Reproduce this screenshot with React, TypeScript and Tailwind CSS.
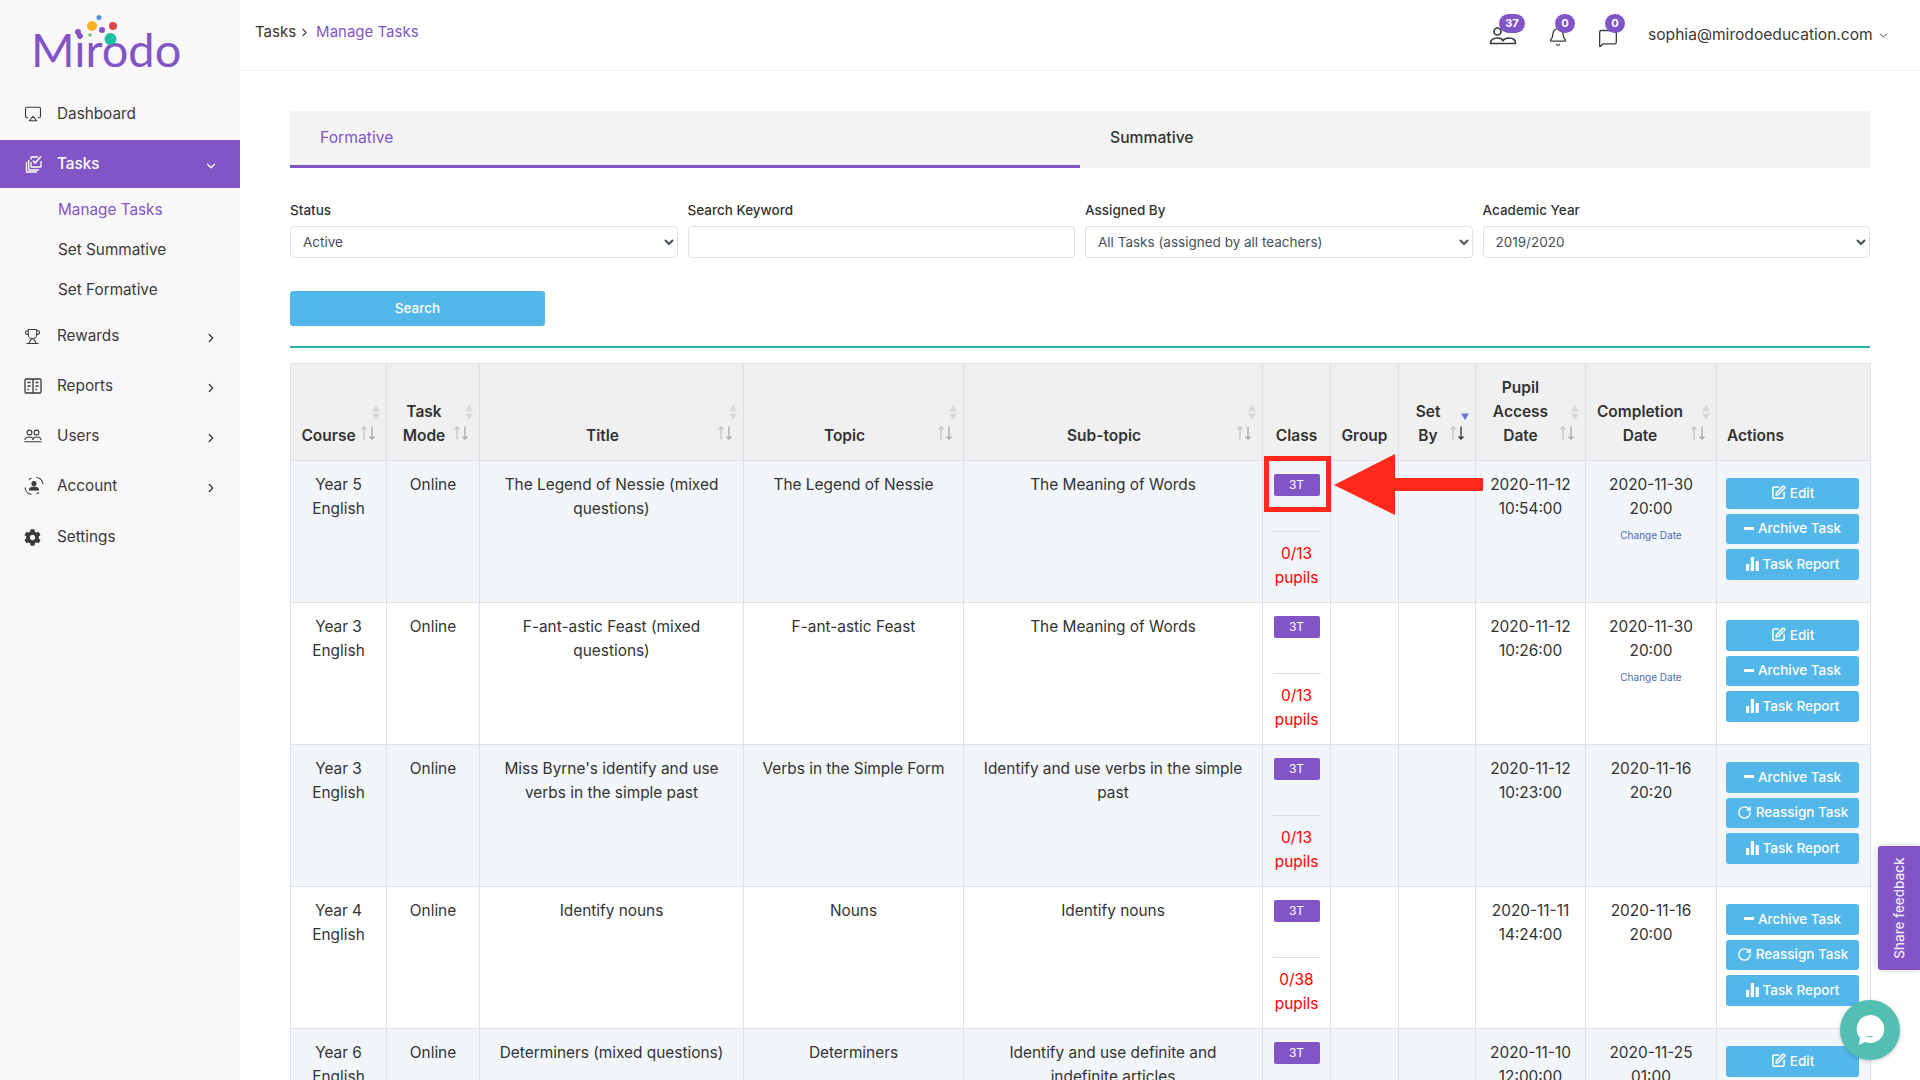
import { Airplay, Bell, ChevronDown, ChevronRight, MessageSquare, RotateCw, SquarePen, Trophy } from "lucide-react";
import { FaCog } from "react-icons/fa";

const FONT = "font-['Inter','Liberation_Sans',sans-serif]";

type Action = "edit" | "archive" | "reassign" | "report";

type Row = {
  course: string[];
  title: string;
  topic: string;
  subtopic: string;
  pupils: string;
  access: string[];
  completion: string[];
  changeDate?: boolean;
  actions: Action[];
};

const rows: Row[] = [
  {
    course: ["Year 5", "English"],
    title: "The Legend of Nessie (mixed questions)",
    topic: "The Legend of Nessie",
    subtopic: "The Meaning of Words",
    pupils: "0/13",
    access: ["2020-11-12", "10:54:00"],
    completion: ["2020-11-30", "20:00"],
    changeDate: true,
    actions: ["edit", "archive", "report"],
  },
  {
    course: ["Year 3", "English"],
    title: "F-ant-astic Feast (mixed questions)",
    topic: "F-ant-astic Feast",
    subtopic: "The Meaning of Words",
    pupils: "0/13",
    access: ["2020-11-12", "10:26:00"],
    completion: ["2020-11-30", "20:00"],
    changeDate: true,
    actions: ["edit", "archive", "report"],
  },
  {
    course: ["Year 3", "English"],
    title: "Miss Byrne's identify and use verbs in the simple past",
    topic: "Verbs in the Simple Form",
    subtopic: "Identify and use verbs in the simple past",
    pupils: "0/13",
    access: ["2020-11-12", "10:23:00"],
    completion: ["2020-11-16", "20:20"],
    actions: ["archive", "reassign", "report"],
  },
  {
    course: ["Year 4", "English"],
    title: "Identify nouns",
    topic: "Nouns",
    subtopic: "Identify nouns",
    pupils: "0/38",
    access: ["2020-11-11", "14:24:00"],
    completion: ["2020-11-16", "20:00"],
    actions: ["archive", "reassign", "report"],
  },
  {
    course: ["Year 6", "English"],
    title: "Determiners (mixed questions)",
    topic: "Determiners",
    subtopic: "Identify and use definite and indefinite articles",
    pupils: "0/13",
    access: ["2020-11-10", "12:00:00"],
    completion: ["2020-11-25", "01:00"],
    actions: ["edit", "archive", "report"],
  },
];

const TasksIcon = () => (
  <svg width="18" height="18" viewBox="0 0 18 18" fill="none" stroke="currentColor" strokeWidth="1.3">
    <path d="M6 4.5V2.6c0-.4.3-.6.6-.6h6.400M16 6v5.400c0 .4-.3.6-.6.6H6.600c-.4 0-.6-.3-.6-.6V7" />
    <path d="M3.700 5v9.400c0 .3.2.6.6.6H14" />
    <path d="M1.500 7v9.400c0 .3.2.6.6.6H12" />
    <path d="M8 5.500l2.200 2.500L16 1.500" strokeWidth="1.500" />
  </svg>
);

const ReportsIcon = () => (
  <svg width="18" height="16" viewBox="0 0 18 16" fill="none" stroke="currentColor" strokeWidth="1.3">
    <rect x="1" y="1" width="16" height="14" rx="1.2" />
    <path d="M9 1v14M3.500 4.500h3M11.500 4.500h3M3.500 8h3M11.500 8h3M3.500 11.500h1.500M11.500 11.500h1.500" />
  </svg>
);

const UsersIcon = () => (
  <svg width="18" height="14" viewBox="0 0 18 14" fill="none" stroke="currentColor" strokeWidth="1.1">
    <circle cx="5.500" cy="3.500" r="2.400" />
    <circle cx="12.500" cy="3.500" r="2.400" />
    <path d="M1 11c0-2 2-3 4.500-3S9 9 9 11M9 11c0-2 1-3 3.500-3s4.500 1 4.500 3M.5 12.700h17" />
  </svg>
);

const AccountIcon = () => (
  <svg width="20" height="20" viewBox="0 0 20 20" fill="none" stroke="currentColor" strokeWidth="1.100">
    <circle cx="10" cy="7.500" r="2" fill="currentColor" />
    <path d="M5.500 14c0-2 2-3 4.500-3s4.500 1 4.500 3z" fill="currentColor" />
    <path d="M1 11.500c.3 3.500 3 6.500 6.500 7M19 8c-.4-3.300-3-6-6.500-6.800M5 3.500c.8-.6 1.600-1 2.500-1.300M15 16.500c-.8.6-1.600 1-2.500 1.300" />
  </svg>
);

const PupilIcon = () => (
  <svg width="28" height="18" viewBox="0 0 28 18" fill="none" stroke="#3a3a3a" strokeWidth="1.700">
    <circle cx="8.500" cy="4.500" r="3.500" />
    <path d="M1 16.500h26M1.500 16.500c0-3.500 3-5.500 7-5.500 3 0 4.500 1 5.500 2.500 1-1.500 3-2.500 6-2.500 4 0 6.500 2 6.500 5.500" />
  </svg>
);

const BarsIcon = () => (
  <svg width="13" height="14" viewBox="0 0 13 14" fill="currentColor">
    <rect x="0" y="7" width="3.200" height="7" rx="0.500" />
    <rect x="4.800" y="0" width="3.200" height="14" rx="0.500" />
    <rect x="9.600" y="4" width="3.200" height="10" rx="0.500" />
  </svg>
);

function SortMarks({ active }: { active?: boolean }) {
  return (
    <>
      <span className="absolute top-[41px] right-[5px] w-[10px]">
        <svg width="10" height="16" viewBox="0 0 10 16">
          {!active && <path d="M5 0l4 6.500H1z" fill="#d8d8d8" />}
          <path d="M5 15l4-6.500H1z" fill={active ? "#6c74d8" : "#d8d8d8"} />
        </svg>
      </span>
      <span className="absolute top-[62px] right-[10px]">
        <svg width="16" height="14" viewBox="0 0 16 14" fill="none" strokeWidth="1.300">
          <path d="M4 13.500V1M1.500 3.500L4 1l2.500 2.500" stroke="#c4c4c4" />
          <path d="M12 .5V13M9.500 10.500L12 13l2.500-2.500" stroke={active ? "#333" : "#a8a8a8"} />
        </svg>
      </span>
    </>
  );
}

function ActionButton({ kind }: { kind: Action }) {
  const base = "flex h-[30.500px] w-[133px] items-center justify-center gap-[4px] rounded-[3px] bg-[#54b7ea] pb-[1px] text-[13.500px] font-medium text-white";
  if (kind === "edit") {
    return (
      <button className={base}>
        <SquarePen size={15} strokeWidth={2.400} />
        Edit
      </button>
    );
  }
  if (kind === "archive") {
    return (
      <button className={base}>
        <span className="h-[3px] w-[10px] bg-white" />
        Archive Task
      </button>
    );
  }
  if (kind === "reassign") {
    return (
      <button className={base}>
        <RotateCw size={15} strokeWidth={2.200} />
        Reassign Task
      </button>
    );
  }
  return (
    <button className={base}>
      <BarsIcon />
      Task Report
    </button>
  );
}

function NavItem({ label, icon, chevron = true }: { label: string; icon: React.ReactNode; chevron?: boolean }) {
  return (
    <div className="flex h-[50px] items-center pl-[24px] pr-[22px] text-[#3a3a3a]">
      <span className="flex w-[33px] shrink-0 items-center">{icon}</span>
      <span className="flex-1 text-[15.300px]">{label}</span>
      {chevron && <ChevronRight size={14} strokeWidth={2.200} className="mt-[4px]" />}
    </div>
  );
}

function Badge({ value, className }: { value: string; className: string }) {
  return (
    <span className={`absolute top-[14px] flex h-[19px] items-center justify-center rounded-full bg-[#8255c6] text-[11px] font-bold text-white ${className}`}>
      {value}
    </span>
  );
}

function Field({ label, children }: { label: string; children: React.ReactNode }) {
  return (
    <div>
      <label className="mb-[6px] block h-[20px] text-[13.500px] leading-[20px] font-medium text-[#333]">{label}</label>
      {children}
    </div>
  );
}

const Select = ({ value }: { value: string }) => (
  <select
    defaultValue={value}
    className="h-[32px] w-full rounded-[4px] border border-[#dbe2ea] bg-white pl-[8px] text-[13.500px] text-[#495057]"
  >
    <option>{value}</option>
  </select>
);

const headCell = "relative border border-[#dee2e6] pt-3 pb-[12px] pl-3 pr-[30px] align-bottom text-[15.500px] leading-[24px] font-semibold text-[#333]";
const bodyCell = "border border-[#dee2e6] px-2 pt-3 align-top text-center text-[15.400px] leading-[24px] text-[#333]";

export default function App() {
  return (
    <div className={`relative flex h-screen overflow-hidden bg-white ${FONT}`}>
      <aside className="w-[240px] shrink-0 bg-[#f9f7f9]">
        <div className="relative h-[89px]">
          <span className="absolute top-[19px] left-[31px] font-['Lato',sans-serif] text-[47px] leading-[60px] text-[#8255c6]">Mirodo</span>
          <svg className="absolute top-0 left-0" width="240" height="89">
            <circle cx="99" cy="17.500" r="2.500" fill="#4a90e2" />
            <circle cx="92" cy="26" r="5" fill="#fbb324" />
            <circle cx="113" cy="26" r="4" fill="#e04545" />
            <circle cx="102" cy="30" r="3" fill="#8255c6" />
            <circle cx="78" cy="32" r="3" fill="#8255c6" />
            <circle cx="90" cy="35" r="1.700" fill="#63c76a" />
            <circle cx="110.500" cy="39" r="6" fill="#1cc0a0" />
          </svg>
        </div>
        <NavItem label="Dashboard" chevron={false} icon={<Airplay size={18} strokeWidth={1.500} />} />
        <div className="mt-[1px] flex h-[48px] items-center bg-[#8255c6] pl-[25px] pr-[22px] text-white">
          <span className="flex w-[32px] shrink-0 items-center">
            <TasksIcon />
          </span>
          <span className="flex-1 text-[15.300px] font-medium">Tasks</span>
          <ChevronDown size={14} strokeWidth={2.200} className="mt-[4px]" />
        </div>
        <div className="mb-[1px] flex flex-col pt-[2px] pl-[58px] text-[15.300px] text-[#3a3a3a]">
          <span className="flex h-[40px] items-center text-[#8255c6]">Manage Tasks</span>
          <span className="flex h-[40px] items-center">Set Summative</span>
          <span className="flex h-[40px] items-center">Set Formative</span>
        </div>
        <NavItem label="Rewards" icon={<Trophy size={17} strokeWidth={1.500} />} />
        <NavItem label="Reports" icon={<ReportsIcon />} />
        <NavItem label="Users" icon={<UsersIcon />} />
        <NavItem label="Account" icon={<AccountIcon />} />
        <div className="mt-[1px]">
          <NavItem label="Settings" chevron={false} icon={<FaCog size={17} />} />
        </div>
      </aside>

      <div className="min-w-0 flex-1">
        <header className="relative flex h-[71px] items-center border-b border-[#f0f0f0] pl-[15px] pr-[30px]">
          <div className="mb-[5px] flex items-center">
            <span className="text-[15px] text-[#333]">Tasks</span>
            <ChevronRight size={13} strokeWidth={2} className="mx-[2px] text-[#444]" />
            <span className="ml-[3px] text-[15px] text-[#8255c6]">Manage Tasks</span>
          </div>
          <div className="ml-auto flex items-center text-[#3a3a3a]">
            <span className="mt-[1px] mr-[31px]">
              <PupilIcon />
            </span>
            <Bell size={20} strokeWidth={1.600} className="mt-[4px] mr-[30px]" />
            <MessageSquare size={20} strokeWidth={1.600} className="mt-[6px] mr-[30px]" />
            <span className="w-[225px] text-[15.600px] whitespace-nowrap">sophia@mirodoeducation.com</span>
            <ChevronDown size={13} strokeWidth={1.800} className="ml-[4px]" />
          </div>
          <Badge value="37" className="left-[1259px] w-[26px]" />
          <Badge value="0" className="left-[1315px] w-[20px]" />
          <Badge value="0" className="left-[1365px] w-[20px]" />
        </header>

        <main className="px-[50px] pt-[40px]">
          <div className="flex h-[57px] bg-[#f4f4f4]">
            <div className="flex w-[790px] items-center border-b-[3px] border-[#8255c6] pl-[30px] text-[15.700px] text-[#8255c6]">Formative</div>
            <div className="flex items-center border-b-[3px] border-transparent pl-[30px] text-[15.700px] font-medium text-[#333]">Summative</div>
          </div>

          <div className="mt-[32px] grid grid-cols-4 gap-[10px]">
            <Field label="Status">
              <Select value="Active" />
            </Field>
            <Field label="Search Keyword">
              <input className="h-[32px] w-full rounded-[4px] border border-[#dbe2ea] bg-white" />
            </Field>
            <Field label="Assigned By">
              <Select value="All Tasks (assigned by all teachers)" />
            </Field>
            <Field label="Academic Year">
              <Select value="2019/2020" />
            </Field>
          </div>

          <button className="mt-[33px] block h-[35px] w-[255px] rounded-[3px] bg-[#54b7ea] text-[13.500px] font-medium text-white">Search</button>
          <div className="mt-[20px] h-[2px] bg-[#2fb3a3]" />

          <table className="mt-[15px] w-[1580px] table-fixed border-collapse">
            <colgroup>
              <col className="w-[96px]" />
              <col className="w-[93px]" />
              <col className="w-[264px]" />
              <col className="w-[220px]" />
              <col className="w-[299px]" />
              <col className="w-[68px]" />
              <col className="w-[68px]" />
              <col className="w-[77px]" />
              <col className="w-[110px]" />
              <col className="w-[131px]" />
              <col className="w-[154px]" />
            </colgroup>
            <thead>
              <tr className="h-[97px] bg-[#f0f0f0]">
                <th className={`${headCell} !pl-[10px]`}>
                  Course
                  <SortMarks />
                </th>
                <th className={headCell}>
                  Task Mode
                  <SortMarks />
                </th>
                <th className={headCell}>
                  Title
                  <SortMarks />
                </th>
                <th className={headCell}>
                  Topic
                  <SortMarks />
                </th>
                <th className={headCell}>
                  Sub-topic
                  <SortMarks />
                </th>
                <th className={`${headCell} !px-0`}>Class</th>
                <th className={`${headCell} !px-0`}>Group</th>
                <th className={headCell}>
                  Set By
                  <SortMarks active />
                </th>
                <th className={`${headCell} !pl-[10px]`}>
                  Pupil Access Date
                  <SortMarks />
                </th>
                <th className={`${headCell} !pl-[8px]`}>
                  Completion Date
                  <SortMarks />
                </th>
                <th className={`${headCell} !pl-[10px] !pr-0 text-left`}>Actions</th>
              </tr>
            </thead>
            <tbody>
              {rows.map((row, i) => (
                <tr key={row.title} className={`h-[142px] ${i % 2 === 0 ? "bg-[#f2f5f9]" : "bg-white"}`}>
                  <td className={bodyCell}>
                    {row.course[0]}
                    <br />
                    {row.course[1]}
                  </td>
                  <td className={bodyCell}>Online</td>
                  <td className={`${bodyCell} !px-3`}>{row.title}</td>
                  <td className={bodyCell}>{row.topic}</td>
                  <td className={`${bodyCell} !px-4`}>{row.subtopic}</td>
                  <td className={`${bodyCell} !px-0 !pt-[13px]`}>
                    <span className="mx-auto flex h-[22px] w-[46px] items-center justify-center rounded-[2px] bg-[#8255c6] text-[12px] leading-none text-white">3T</span>
                    <div className="mx-auto mt-[35px] h-px w-[48px] bg-[#dcdcdc]" />
                    <div className="mt-[10px] text-[#ff0000]">
                      {row.pupils}
                      <br />
                      pupils
                    </div>
                  </td>
                  <td className={bodyCell} />
                  <td className={bodyCell} />
                  <td className={`${bodyCell} !px-0`}>
                    {row.access[0]}
                    <br />
                    {row.access[1]}
                  </td>
                  <td className={`${bodyCell} !px-0`}>
                    {row.completion[0]}
                    <br />
                    {row.completion[1]}
                    {row.changeDate && <div className="mt-[7px] text-[10px] leading-[15px] text-[#4a6bb0]">Change Date</div>}
                  </td>
                  <td className={`${bodyCell} !pt-[17px] !pr-0 !pl-[9px]`}>
                    <div className="flex flex-col gap-[5px]">
                      {row.actions.map((a) => (
                        <ActionButton key={a} kind={a} />
                      ))}
                    </div>
                  </td>
                </tr>
              ))}
            </tbody>
          </table>
        </main>
      </div>

      {/* annotation drawn over the first row */}
      <div className="absolute top-[456px] left-[1264px] h-[56px] w-[67px] border-[5px] border-[#ff2a1c]" />
      <svg className="absolute top-[454px] left-[1334px]" width="150" height="62" viewBox="0 0 150 62">
        <path d="M0 31L61 0V24H149V37H61V61z" fill="#ff2a1c" />
      </svg>

      <div className="absolute top-[846px] right-0 flex h-[124px] w-[42px] items-center justify-center rounded-l-[3px] bg-[#8255c6] shadow-[0_0_6px_rgba(0,0,0,0.2)]">
        <span className="-rotate-90 whitespace-nowrap text-[13.500px] font-medium text-[#efe8fa]">Share feedback</span>
      </div>
      <div className="absolute top-[1000px] left-[1840px] flex h-[60px] w-[60px] items-center justify-center rounded-full bg-[#52bfb2] shadow-[0_1px_4px_rgba(0,0,0,0.2)]">
        <svg width="30" height="32" viewBox="0 0 30 32">
          <path d="M15 1a14 14 0 1 1-5 27l-6 3 1-7A14 14 0 0 1 15 1z" fill="#fff" />
          <path d="M11 22c2 1.500 6 1.500 8 0z" fill="#52bfb2" />
        </svg>
      </div>
    </div>
  );
}
